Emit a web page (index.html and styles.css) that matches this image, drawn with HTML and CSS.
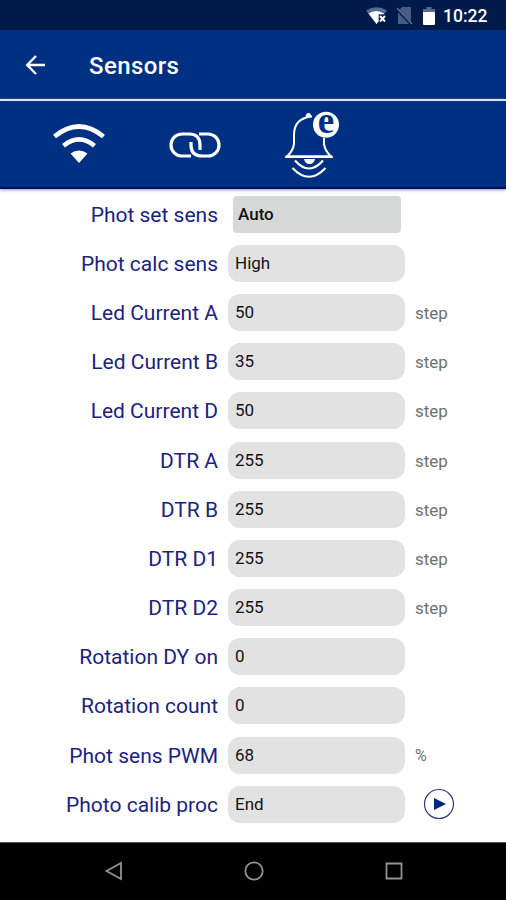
FILE: index.html
```html
<!DOCTYPE html>
<html lang="en">
<head>
<meta charset="utf-8">
<title>Sensors</title>
<link rel="stylesheet" href="styles.css">
</head>
<body>
<div class="screen">
  <div class="status">
    <svg class="s-wifi" width="22" height="18" viewBox="0 0 22 18">
      <path d="M0 3.500Q10.500-3 21 3.500L10.500 17Z" fill="#566b91"/>
      <path d="M2.500 6.500Q10.500 1.500 18 6.500V7H12.500V14.500L10.500 17Z" fill="#fff"/>
      <path d="M13 8H21V16H13Z" fill="#001a4b"/>
      <path d="M14 9L19 14.500M19 9L14 14.500" stroke="#fff" stroke-width="1.900"/>
    </svg>
    <svg class="s-sim" width="17" height="18" viewBox="0 0 17 18">
      <path d="M6 0H15V17H2V5Z" fill="#4a5d83"/>
      <path d="M0 1L16 18" stroke="#001a4b" stroke-width="3"/>
      <path d="M1 1L16 17" stroke="#617397" stroke-width="1.400"/>
    </svg>
    <svg class="s-bat" width="12" height="18" viewBox="0 0 12 18">
      <path d="M3.500 0H8.500V2H12V6H0V2H3.500Z" fill="#566b91"/>
      <path d="M0 5H12V17Q12 18 11 18H1Q0 18 0 17Z" fill="#fff"/>
    </svg>
    <span class="clock">10:22</span>
  </div>
  <header class="appbar">
    <svg class="back" width="22" height="22" viewBox="0 0 22 22"><path d="M20 11H2.500M11 2L2.200 11L11 20" fill="none" stroke="#fff" stroke-width="2.400"/></svg>
    <h1 class="title">Sensors</h1>
  </header>
  <nav class="tabs">
    <svg class="t-wifi" width="52" height="40" viewBox="0 0 52 40">
      <path d="M1.500 12.500Q26-7.500 50.500 12.500M10.500 21.800Q26 9 41.500 21.800" fill="none" stroke="#fff" stroke-width="4.600"/>
      <path d="M17.500 29.500Q26 23.500 34.500 29.500L26 39Z" fill="#fff"/>
    </svg>
    <svg class="t-link" width="52" height="26" viewBox="0 0 52 26">
      <path d="M22 24H13A11 11 0 0 1 13 2H20Q31 2 31 13V18M30 2H39A11 11 0 0 1 39 24H33Q22 24 22 13V10" fill="none" stroke="#fff" stroke-width="3.200"/>
    </svg>
    <svg class="t-bell" width="56" height="68" viewBox="0 0 56 68">
      <path d="M28 4.500Q10 6 10 23V32Q9 39 3 44.500H47Q41 39 40 32V26" fill="none" stroke="#fff" stroke-width="2"/>
      <path d="M1.500 44.700H48.500" stroke="#fff" stroke-width="2.400"/>
      <path d="M21.500 5Q22 1 24.500 1T27.500 5ZM20 47H31Q30 52 25.500 52T20 47Z" fill="#fff"/>
      <path d="M11 48.500Q25 64.500 39 48.500M8.500 56Q25 73.500 41.500 56" fill="none" stroke="#fff" stroke-width="2.100"/>
      <circle cx="42" cy="12.700" r="13" fill="#fff"/>
      <text class="bell-e" x="42" y="21" text-anchor="middle">e</text>
    </svg>
  </nav>
  <main class="form">
    <div class="row"><span class="label">Phot set sens</span><span class="field select">Auto</span></div>
    <div class="row"><span class="label">Phot calc sens</span><span class="field">High</span></div>
    <div class="row"><span class="label">Led Current A</span><span class="field">50</span><span class="unit">step</span></div>
    <div class="row"><span class="label">Led Current B</span><span class="field">35</span><span class="unit">step</span></div>
    <div class="row"><span class="label">Led Current D</span><span class="field">50</span><span class="unit">step</span></div>
    <div class="row"><span class="label">DTR A</span><span class="field">255</span><span class="unit">step</span></div>
    <div class="row"><span class="label">DTR B</span><span class="field">255</span><span class="unit">step</span></div>
    <div class="row"><span class="label">DTR D1</span><span class="field">255</span><span class="unit">step</span></div>
    <div class="row"><span class="label">DTR D2</span><span class="field">255</span><span class="unit">step</span></div>
    <div class="row"><span class="label">Rotation DY on</span><span class="field">0</span></div>
    <div class="row"><span class="label">Rotation count</span><span class="field">0</span></div>
    <div class="row"><span class="label">Phot sens PWM</span><span class="field">68</span><span class="unit percent">%</span></div>
    <div class="row"><span class="label">Photo calib proc</span><span class="field">End</span>
      <svg class="play" width="32" height="32" viewBox="0 0 32 32"><circle cx="16" cy="16" r="14.500" fill="none" stroke="#303985" stroke-width="1.200"/><path d="M11 10L23 16L11 22Z" fill="#00257c"/></svg>
    </div>
  </main>
  <footer class="navbar">
    <svg width="20" height="20" viewBox="0 0 20 20"><path d="M17 2V18L2.500 10Z"/></svg>
    <svg width="20" height="20" viewBox="0 0 20 20"><circle cx="10" cy="10" r="8.700"/></svg>
    <svg width="20" height="20" viewBox="0 0 20 20"><path d="M2.500 2.500H17.500V17.500H2.500Z"/></svg>
  </footer>
</div>
</body>
</html>
```
FILE: styles.css
```css
* { box-sizing: border-box; }
body { margin: 0; font-family: Roboto, sans-serif; background: #fff; }
svg { display: block; flex: none; }
.screen { width: 506px; height: 900px; display: flex; flex-direction: column; overflow: hidden; }
.status { height: 30px; background: #001a4b; display: flex; align-items: center; padding: 2px 19px 0 0; justify-content: flex-end; }
.s-wifi { margin-right: 8px; }
.s-sim { margin-right: 10px; }
.s-bat { margin-right: 8px; }
.clock { color: #fff; font-size: 17.500px; line-height: 20px; font-weight: 500; width: 44px; white-space: nowrap; }
.appbar { height: 69px; background: #003082; display: flex; align-items: center; padding-left: 25px; }
.title { margin: 2px 0 0 42px; color: #fff; font-size: 24px; line-height: 30px; font-weight: 500; letter-spacing: .4px; }
.tabs { height: 90px; background: #003082; border-top: 2px solid #dde3f5; border-bottom: 2px solid #000b64; display: flex; align-items: flex-start; padding-left: 53px; flex: none; box-shadow: 0 1px 3px #8d93ad; position: relative; }
.t-wifi { margin-top: 23px; }
.t-link { margin: 31px 0 0 64px; }
.t-bell { margin: 11px 0 0 63px; overflow: visible; }
.bell-e { font: 700 37px "Liberation Serif", serif; fill: #003082; }
.form { flex: 1; padding-top: .5px; }
.row { height: 49.200px; display: flex; align-items: center; }
.label { width: 218px; padding-top: 1px; text-align: right; color: #1a237e; font-size: 21px; white-space: nowrap; }
.field { width: 177px; height: 37px; margin-left: 10px; border-radius: 12px; background: #e2e2e2; color: #111; font-size: 17px; line-height: 37px; padding-left: 7px; }
.select { width: 168px; margin-left: 15px; padding-left: 5px; border-radius: 4px; background: #d6d8d7; font-weight: 500; }
.unit { margin-left: 10px; padding-top: 1px; color: #707070; font-size: 17px; }
.percent { font-size: 16px; }
.play { margin-left: 18px; }
.navbar { height: 58px; background: #000; border-top: 1px solid #555; display: flex; align-items: center; justify-content: center; gap: 120px; flex: none; padding: 0 0 2px 1px; }
.navbar svg { fill: none; stroke: #929292; stroke-width: 1.800; }
```
